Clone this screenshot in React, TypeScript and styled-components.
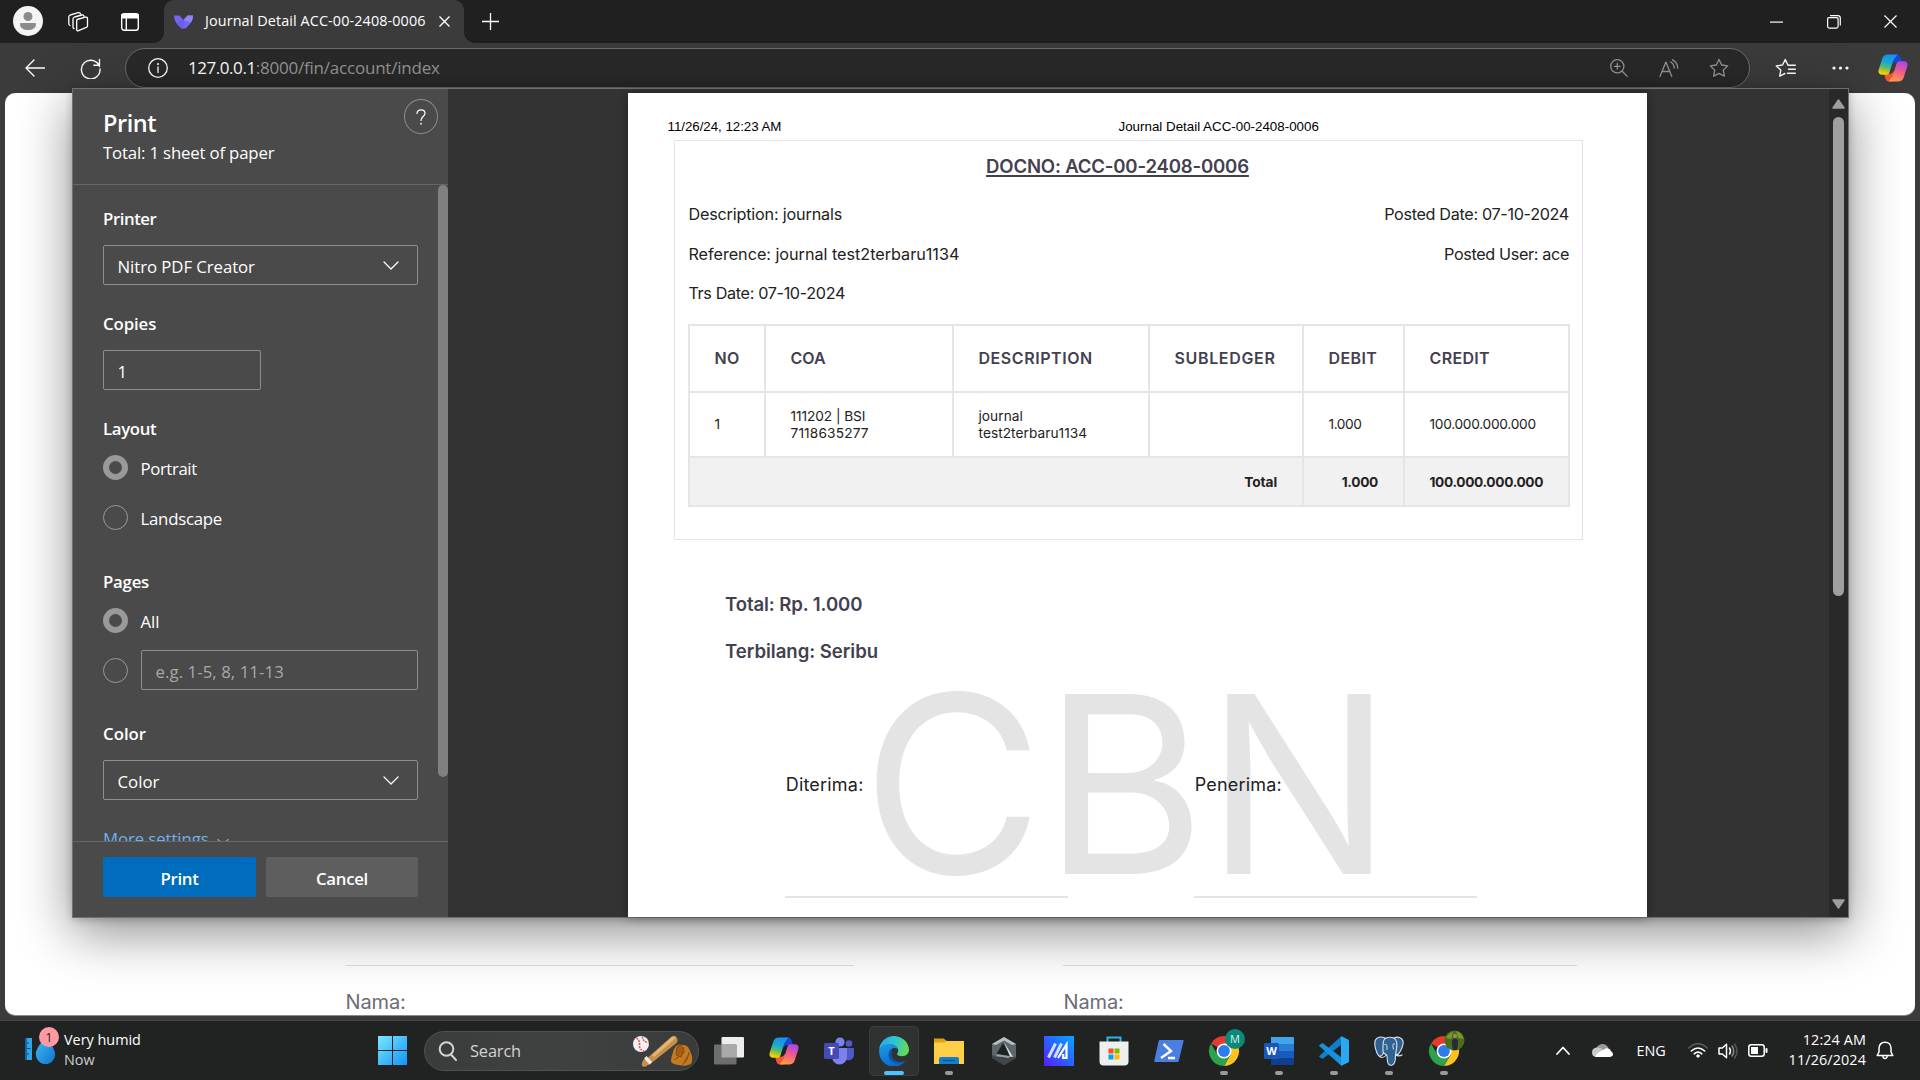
import React from "react";
import styled, { createGlobalStyle } from "styled-components";

const UI = `"Open Sans", "Noto Sans", sans-serif`;
const DOC = `Inter, "Liberation Sans", sans-serif`;

const Global = createGlobalStyle`
  * { box-sizing: border-box; }
  html, body { margin: 0; padding: 0; background: #3b3b3b; overflow: hidden; }
  svg { display: block; flex: none; }
`;

const Screen = styled.div`
  width: 1920px;
  height: 1080px;
  display: flex;
  flex-direction: column;
  background: #3b3b3b;
  color: #fff;
  font-family: ${UI};
  overflow: hidden;
`;

const Spaced = styled.span<{ $ls: number }>`
  letter-spacing: ${(p) => p.$ls}px;
  white-space: nowrap;
`;

/* ---------- Tab strip ---------- */
const TabStrip = styled.header`
  height: 43px;
  flex: none;
  display: flex;
  background: #202020;
  padding-left: 3px;
`;
const IconSlot = styled.div<{ $w?: number; $ml?: number }>`
  width: ${(p) => p.$w ?? 50}px;
  margin-left: ${(p) => p.$ml ?? 0}px;
  height: 100%;
  flex: none;
  display: flex;
  align-items: center;
  justify-content: center;
`;
const Avatar = styled.div`
  width: 30px;
  height: 30px;
  margin-top: -1px;
  border-radius: 50%;
  background: #f4f4f4;
  display: grid;
  place-items: center;
`;
const Tab = styled.div`
  position: relative;
  width: 300px;
  margin-left: 9px;
  padding: 0 14px 0 10px;
  display: flex;
  align-items: center;
  background: #3b3b3b;
  border-radius: 10px 10px 0 0;
  font-size: 14.4px;
  &::before, &::after {
    content: "";
    position: absolute;
    bottom: 0;
    width: 10px;
    height: 10px;
  }
  &::before { left: -10px; background: radial-gradient(circle at 0 0, transparent 9.5px, #3b3b3b 10px); }
  &::after { right: -10px; background: radial-gradient(circle at 100% 0, transparent 9.5px, #3b3b3b 10px); }
`;
const TabTitle = styled.span`
  margin: -2px auto 0 12px;
  letter-spacing: 0.1px;
  white-space: nowrap;
`;
const WindowControls = styled.div`
  display: flex;
  margin-left: auto;
  padding-right: 1px;
`;

/* ---------- Toolbar ---------- */
const Toolbar = styled.div`
  height: 50px;
  flex: none;
  display: flex;
  align-items: flex-start;
  padding: 5px 0 5px 10px;
  background: #3b3b3b;
`;
const AddressBar = styled.div`
  width: 1625px;
  height: 40px;
  margin-left: 10px;
  padding-right: 5px;
  display: flex;
  align-items: center;
  background: #292929;
  border: 1px solid #6b6b6b;
  border-radius: 20px;
  font-size: 17px;
  color: #969696;
`;
const Url = styled.div`
  margin-right: auto;
  margin-top: -2px;
  margin-left: -1px;
  white-space: nowrap;
`;
const Host = styled.span`
  color: #fff;
  letter-spacing: -0.45px;
`;

/* ---------- Browser viewport ---------- */
const Viewport = styled.main`
  position: relative;
  height: 927px;
  flex: none;
  padding: 0 5px 5px;
`;
const WebPage = styled.div`
  height: 922px;
  padding: 872px 0 0 340px;
  display: flex;
  gap: 209px;
  background: #fff;
  border-radius: 10px;
  overflow: hidden;
  box-shadow: 0 1px 0 #8a8a8a;
`;
const PageSigner = styled.div<{ $w: number }>`
  width: ${(p) => p.$w}px;
  border-top: 1px solid #dfdfe1;
  padding: 24px 0 0 0.6px;
  font: 400 20px/24px ${DOC};
  letter-spacing: -0.16px;
  color: #6d6b77;
`;

/* ---------- Print dialog ---------- */
const Dialog = styled.section`
  position: absolute;
  left: 72px;
  top: -5px;
  width: 1777px;
  height: 830px;
  display: flex;
  border: 1px solid #707070;
  background: #333;
  box-shadow: 0 14px 50px rgba(0, 0, 0, 0.46), 0 2px 8px rgba(0, 0, 0, 0.2);
`;
const Sidebar = styled.aside`
  width: 375px;
  flex: none;
  display: flex;
  flex-direction: column;
  background: #4a4a4a;
  font-size: 16.8px;
`;
const SideHeader = styled.div`
  height: 96px;
  flex: none;
  display: flex;
  justify-content: space-between;
  padding: 10px 10px 0 30px;
  border-bottom: 1px solid #666;
`;
const Heading = styled.h1`
  margin: 8px 0 0;
  font-size: 23.5px;
  line-height: 32px;
  font-weight: 600;
  letter-spacing: -0.45px;
`;
const SheetCount = styled.div`
  line-height: 26px;
  letter-spacing: -0.17px;
  margin-top: 1px;
`;
const HelpButton = styled.button`
  width: 34px;
  height: 35px;
  padding: 0;
  border: 1px solid #8e8e8e;
  border-radius: 50%;
  background: none;
  display: grid;
  place-items: center;
`;
const SideBody = styled.div`
  height: 656px;
  flex: none;
  display: flex;
  justify-content: space-between;
  overflow: hidden;
`;
const Form = styled.div`
  width: 345px;
  padding: 22px 0 0 30px;
`;
const SideThumb = styled.div`
  width: 10px;
  height: 592px;
  border-radius: 5px;
  background: #808080;
`;
const Label = styled.div<{ $ls: number; $mt?: number; $mb?: number }>`
  margin-top: ${(p) => p.$mt ?? 0}px;
  margin-bottom: ${(p) => p.$mb ?? 14}px;
  line-height: 24px;
  font-weight: 600;
  letter-spacing: ${(p) => p.$ls}px;
`;
const Field = styled.div<{ $w?: number; $muted?: boolean }>`
  width: ${(p) => (p.$w ? p.$w + "px" : "100%")};
  height: 40px;
  padding: 2px 18px 0 13.5px;
  display: flex;
  align-items: center;
  justify-content: space-between;
  border: 1px solid #8e8e8e;
  border-radius: 2px;
  color: ${(p) => (p.$muted ? "#a8a8a8" : "#fff")};
`;
const Option = styled.div`
  height: 50px;
  display: flex;
  align-items: center;
  gap: 13px;
`;
const Radio = styled.span<{ $on?: boolean }>`
  width: 25px;
  height: 25px;
  flex: none;
  border-radius: 50%;
  border: ${(p) => (p.$on ? "6px solid #999" : "1px solid #999")};
`;
const OptionText = styled.span<{ $ls: number }>`
  margin: 3px 0 0 -0.5px;
  letter-spacing: ${(p) => p.$ls}px;
`;
const More = styled.div`
  margin-top: 27px;
  display: flex;
  align-items: flex-start;
  gap: 8px;
  line-height: 24px;
  letter-spacing: -0.1px;
  color: #70b0ee;
  svg { margin-top: 11px; }
`;
const SideFooter = styled.div`
  flex: 1;
  display: flex;
  gap: 10px;
  padding: 15px 30px 0;
  border-top: 1px solid #666;
`;
const ActionButton = styled.button<{ $primary?: boolean }>`
  width: ${(p) => (p.$primary ? 153 : 152)}px;
  height: 40px;
  padding: 2px 0 0;
  border: 0;
  border-radius: 2px;
  background: ${(p) => (p.$primary ? "#006cbe" : "#5e5e5e")};
  color: #fff;
  font: 600 16.8px ${UI};
  letter-spacing: -0.3px;
`;
const Preview = styled.div`
  flex: 1;
  display: flex;
  padding: 4px 0 0 180px;
`;
const ScrollTrack = styled.div`
  width: 19px;
  display: flex;
  flex-direction: column;
  align-items: center;
  padding: 10px 0 8px;
  background: #292929;
`;
const ScrollThumb = styled.div`
  width: 11px;
  height: 479px;
  margin: 8px 0 auto;
  border-radius: 6px;
  background: #9f9f9f;
`;

/* ---------- Printed sheet ---------- */
const Sheet = styled.article`
  position: relative;
  z-index: 0;
  width: 1019px;
  background: #fff;
  color: #222;
  font-family: ${DOC};
  overflow: hidden;
  box-shadow: 0 0 10px rgba(0, 0, 0, 0.35);
`;
const RunningHead = styled.div`
  display: grid;
  grid-template-columns: 451px auto;
  padding: 26px 0 0 39.5px;
  font: 13.33px/15px "Liberation Sans", Arial, sans-serif;
  color: #000;
`;
const Journal = styled.div`
  width: 909px;
  height: 400px;
  margin: 6px 0 0 46px;
  padding: 12px 12px 0 13px;
  border: 1px solid #e3e4e6;
`;
const DocNo = styled.h2`
  margin: 0 23px 23px 0;
  text-align: center;
  font-size: 18.6px;
  line-height: 26px;
  font-weight: 600;
  letter-spacing: -0.19px;
  color: #444050;
  text-decoration: underline;
  text-decoration-thickness: 2px;
  text-underline-offset: 2px;
  text-decoration-skip-ink: none;
`;
const Meta = styled.div`
  display: flex;
  justify-content: space-between;
  font-size: 16.2px;
  line-height: 24px;
  margin-bottom: 19px;
`;
const MetaColumn = styled.div<{ $end?: boolean }>`
  display: flex;
  flex-direction: column;
  gap: 15.5px;
  padding: 0 ${(p) => (p.$end ? 1 : 0)}px 0 0.4px;
  align-items: ${(p) => (p.$end ? "flex-end" : "flex-start")};
`;
const Table = styled.div`
  display: grid;
  grid-template-columns: 76px 188px 196px 154px 101px 165px;
  grid-template-rows: 67px 65px 49px;
  border: solid #e4e5e8;
  border-width: 2px 0 0 2px;
`;
const Cell = styled.div<{ $kind?: "head" | "total"; $span?: number; $end?: boolean; $ls?: number }>`
  grid-column: span ${(p) => p.$span ?? 1};
  display: flex;
  align-items: center;
  justify-content: ${(p) => (p.$end ? "flex-end" : "flex-start")};
  padding: ${(p) => (p.$kind === "total" ? 1 : 0)}px 25px 0 24.5px;
  border: solid #e4e5e8;
  border-width: 0 2px 2px 0;
  white-space: nowrap;
  background: ${(p) => (p.$kind === "total" ? "#f1f1f1" : "#fff")};
  color: ${(p) => (p.$kind === "head" ? "#444050" : "#222")};
  font-size: ${(p) => (p.$kind === "head" ? 16 : 13.7)}px;
  font-weight: ${(p) => (p.$kind === "head" ? 600 : p.$kind === "total" ? 700 : 400)};
  line-height: 16.3px;
  letter-spacing: ${(p) => p.$ls ?? 0}px;
`;
const SummaryLine = styled.div<{ $mt: number; $ls: number }>`
  margin: ${(p) => p.$mt}px 0 0 97px;
  font-size: 18.6px;
  line-height: 28px;
  font-weight: 600;
  letter-spacing: ${(p) => p.$ls}px;
  color: #444050;
`;
const Signatures = styled.div`
  display: flex;
  gap: 126px;
  margin: 108px 0 0 157px;
`;
const Signer = styled.div`
  width: 283px;
  height: 125px;
  border-bottom: 2px solid #e4e4e4;
  padding-left: 0.7px;
  font-size: 18px;
  line-height: 24px;
  letter-spacing: 0.2px;
`;
const Watermark = styled.div`
  position: absolute;
  z-index: -1;
  left: 234px;
  top: 567px;
  font-size: 248px;
  line-height: 248px;
  color: #e4e4e4;
`;

/* ---------- Taskbar ---------- */
const Taskbar = styled.footer`
  height: 60px;
  flex: none;
  display: flex;
  align-items: center;
  background: #212222;
  border-top: 1px solid #444645;
  font-size: 14.4px;
`;
const Weather = styled.div`
  width: 367px;
  height: 100%;
  flex: none;
  display: flex;
  padding: 6px 0 0 25px;
  gap: 5px;
`;
const WeatherText = styled.div`
  line-height: 20px;
  padding-top: 3px;
`;
const Dim = styled.div`
  color: #cfcfcf;
`;
const SearchBox = styled.div`
  width: 275px;
  height: 40px;
  margin: 0 5px 0 7px;
  padding: 0 4px 0 13px;
  display: flex;
  align-items: center;
  background: linear-gradient(90deg, #3a3c3c, #404241 45%, #393c3b);
  border: 1px solid #505251;
  border-radius: 20px;
  color: #d2d2d2;
  font-size: 16.4px;
`;
const SearchText = styled.span`
  margin: -1px auto 0 13px;
  letter-spacing: -0.15px;
`;
const Apps = styled.div`
  display: flex;
  gap: 5px;
`;
const AppSlot = styled.div<{ $active?: boolean; $running?: boolean }>`
  position: relative;
  width: 50px;
  height: 50px;
  display: grid;
  place-items: center;
  border-radius: 5px;
  background: ${(p) => (p.$active ? "#303131" : "none")};
  box-shadow: ${(p) => (p.$active ? "inset 0 0 0 1px #3b3c3c" : "none")};
  &::after {
    content: "";
    position: absolute;
    bottom: 1px;
    left: 50%;
    transform: translateX(-50%);
    width: ${(p) => (p.$active ? 20 : 8)}px;
    height: 4px;
    border-radius: 2px;
    background: ${(p) => (p.$active ? "#4cc2ff" : p.$running ? "#9a9a9a" : "transparent")};
  }
`;
const Tray = styled.div`
  margin-left: auto;
  display: flex;
  align-items: center;
  padding-right: 26px;
`;
const Language = styled.span`
  margin: -1px 22.5px 0 23.5px;
  letter-spacing: -0.1px;
`;
const Status = styled.div`
  display: flex;
  align-items: center;
  gap: 10px;
`;
const Clock = styled.div`
  width: 98px;
  margin-right: 10px;
  text-align: right;
  line-height: 20px;
  letter-spacing: 0.1px;
  margin-top: -2px;
`;

/* ---------- Icons ---------- */
const line = { fill: "none", stroke: "currentColor", strokeLinecap: "round" as const, strokeLinejoin: "round" as const };

const ribbon = "M10 .5h9.500L16.500 4.500c-1.200 1.600-1.800 3.300-2.300 5l-2.700 9c-.5 1.500-1.500 2.200-3 2.200H3.500C1 20.700 0 18.500.6 16L4.300 4.500C5.200 1.700 7 .5 10 .5z";
const fold = "M15 .5h4c2 0 3 1 3.600 3l1.300 4.500H19c-2.300 0-3.800.8-4.600 3L13 9z";
const Copilot = ({ id }: { id: string }) => (
  <svg width="30" height="28" viewBox="0 0 30 28">
    <defs>
      <linearGradient id={id + "a"} x1="0.6" y1="0" x2="0.35" y2="1">
        <stop offset="0" stopColor="#1a8ff0" /><stop offset=".35" stopColor="#16a3d8" />
        <stop offset=".65" stopColor="#53bd72" /><stop offset=".95" stopColor="#f3d000" />
      </linearGradient>
      <linearGradient id={id + "b"} x1="0.35" y1="1" x2="0.65" y2="0">
        <stop offset="0" stopColor="#a648ea" /><stop offset=".45" stopColor="#f0588c" /><stop offset="1" stopColor="#ff9a4a" />
      </linearGradient>
    </defs>
    <path d={fold} fill="#1747cf" />
    <g transform="rotate(180 15 14)">
      <path d={fold} fill="#f4562e" />
      <path d={ribbon} fill={`url(#${id}b)`} />
    </g>
    <path d={ribbon} fill={`url(#${id}a)`} />
  </svg>
);
const Chevron = () => (
  <svg width="16" height="10" viewBox="0 0 16 10" {...line} strokeWidth="1.300"><path d="M1 1l7 7 7-7" /></svg>
);
const Close = ({ s, w = 1.4 }: { s: number; w?: number }) => (
  <svg width={s} height={s} viewBox={`0 0 ${s} ${s}`} stroke="#fff" strokeWidth={w}><path d={`M.5 .5L${s - 0.5} ${s - 0.5}M${s - 0.5} .5L.5 ${s - 0.5}`} /></svg>
);
const star = "M10 1.500l2.700 5.500 6 .9-4.400 4.200 1.100 6-5.400-2.800-5.400 2.800 1.100-6L1.300 7.900l6-.9z";

const Chrome = ({ children }: { children?: React.ReactNode }) => (
  <svg width="38" height="38" viewBox="0 0 38 38" overflow="visible">
    <g transform="translate(4 4)">
      <path d="M15 15L2 7.500A15 15 0 0 1 28 7.500z" fill="#e33b2e" />
      <path d="M15 7.500H28A15 15 0 0 1 15 30l6.500-11.200z" fill="#fcc31e" />
      <path d="M2 7.500A15 15 0 0 0 15 30l6.500-11.200L8.500 18.800z" fill="#2da14c" />
      <circle cx="15" cy="15" r="7.500" fill="#fff" />
      <circle cx="15" cy="15" r="5.900" fill="#2f7bea" />
    </g>
    {children}
  </svg>
);
const Badge = styled.span`
  position: absolute;
  right: 4px;
  top: 3px;
  width: 20px;
  height: 20px;
  border-radius: 50%;
  display: grid;
  place-items: center;
  background: #0b8a7a;
  color: #d5efec;
  font-size: 11px;
`;
const Count = styled.span`
  position: absolute;
  left: 14px;
  top: 0;
  width: 20px;
  height: 20px;
  border-radius: 50%;
  display: grid;
  place-items: center;
  background: #ff99a4;
  color: #3a1a1d;
  font-size: 13px;
`;
const WeatherIcon = styled.div`
  position: relative;
  width: 34px;
  height: 40px;
  padding-top: 5px;
`;
const IconLetter = styled.span<{ $bg: string }>`
  position: absolute;
  left: 10px;
  top: 17px;
  width: 15px;
  height: 16px;
  border-radius: 1.5px;
  display: grid;
  place-items: center;
  background: ${(p) => p.$bg};
  color: #fff;
  font-size: 11px;
  font-weight: 700;
`;

const apps: { id: string; active?: boolean; running?: boolean; icon: React.ReactNode }[] = [
  {
    id: "task-view",
    icon: (
      <svg width="30" height="28" viewBox="0 0 30 28">
        <rect x="7.500" y="0" width="22.500" height="20.500" rx="1" fill="#ededed" />
        <rect x="0" y="7.500" width="22.500" height="20" rx="1" fill="#6e6e6e" />
        <rect x="7.500" y="7.500" width="15" height="13" fill="#a9a9a9" />
      </svg>
    ),
  },
  { id: "copilot", icon: <Copilot id="task" /> },
  {
    id: "teams",
    icon: (
      <>
        <svg width="30" height="28" viewBox="0 0 30 28">
          <circle cx="25" cy="6.500" r="3.300" fill="#5059c9" />
          <circle cx="16" cy="5" r="4.600" fill="#7b83eb" />
          <path d="M21 11h8a1 1 0 0 1 1 1v6a5.500 5.500 0 0 1-9 4z" fill="#5059c9" />
          <path d="M9 11h13a1 1 0 0 1 1 1v8a7.500 7.500 0 0 1-15 0z" fill="#7b83eb" />
        </svg>
        <IconLetter $bg="#444bb5">T</IconLetter>
      </>
    ),
  },
  {
    id: "edge",
    active: true,
    icon: (
      <svg width="30" height="30" viewBox="0 0 30 30">
        <defs>
          <linearGradient id="eg" x1="0" y1=".4" x2="1" y2=".6"><stop offset="0" stopColor="#2aa9e6" /><stop offset=".5" stopColor="#2fc6cf" /><stop offset="1" stopColor="#6bdc4c" /></linearGradient>
          <linearGradient id="eb" x1="0" y1="0" x2=".4" y2="1"><stop offset="0" stopColor="#1b9de2" /><stop offset="1" stopColor="#0b6bd0" /></linearGradient>
        </defs>
        <path d="M.1 14A15 15 0 0 1 30 13.500c0 4-3 6.700-7 6.700-3.200 0-5-1-5-2.100 0-.9 1.200-1.300 1.200-3.700C19.200 11 15.500 8.500 10.800 8.500 5.500 8.500 1.500 11 .1 14z" fill="url(#eg)" />
        <path d="M0 15.500C.5 11 5 8 10.200 8c4.500 0 8.300 2 8.800 5.500-1-1.200-2.300-1.600-3.500-1.600-3 0-5.300 2.800-5.300 6.600 0 4.500 3.800 8.300 9.300 8.300 3.500 0 6-1 7.300-2A15 15 0 0 1 0 15.500z" fill="url(#eb)" />
        <path d="M13.500 12.200c-2.400.8-4 3.200-4 6.500 0 5 4.300 8.800 10 8.800 2.800 0 4.800-.7 6-1.400.6-.3 1-.9 1.300-1.300-1.500.7-3 1-4.600 1-5.400 0-9.600-3-9.600-7.600 0-2.400.5-4.200.9-6z" fill="#0c549f" />
      </svg>
    ),
  },
  {
    id: "explorer",
    running: true,
    icon: (
      <svg width="30" height="28" viewBox="0 0 30 28">
        <path d="M0 1.500h9.500L13 4h17v8H0z" fill="#e0a010" />
        <path d="M0 5.500h10L13 4h17v23H0z" fill="#ffcf47" />
        <path d="M5 27v-5a2 2 0 0 1 2-2h16a2 2 0 0 1 2 2v5z" fill="#1380cf" />
        <path d="M9 23.500h12" stroke="#0a4f8f" strokeWidth="1.200" />
      </svg>
    ),
  },
  {
    id: "armoury",
    icon: (
      <svg width="26" height="28" viewBox="0 0 26 28">
        <path d="M13 0l12 7v14l-12 7-12-7V7z" fill="#5d666c" />
        <path d="M13 0l12 7-4 1-8-4.500L5 8 1 7z" fill="#b9c0c5" />
        <path d="M1 18l5 2h19v1l-12 7L1 21z" fill="#3f4549" />
        <path d="M12 6L5.500 17l14 2z" fill="#1f2223" />
        <path d="M13 5l9 15-3-.6z" fill="#dde0e2" />
        <path d="M5.500 17l14 2.400-2 1.600-12-2z" fill="#9aa1a6" />
      </svg>
    ),
  },
  {
    id: "myasus",
    icon: (
      <svg width="30" height="30" viewBox="0 0 30 30">
        <defs><linearGradient id="my" x1="0" y1="1" x2="1" y2="0"><stop offset="0" stopColor="#5a1bff" /><stop offset=".5" stopColor="#2a63ff" /><stop offset="1" stopColor="#05a8ff" /></linearGradient></defs>
        <rect width="30" height="30" fill="url(#my)" />
        <path d="M4.500 21.500L11.500 7.500M10.500 21.500L17.500 7.500" stroke="#cfe0ff" strokeWidth="3" />
        <path d="M14 22L22.500 8.500v13.500h-3.300v-4" fill="none" stroke="#fff" strokeWidth="2.200" />
      </svg>
    ),
  },
  {
    id: "store",
    icon: (
      <svg width="30" height="30" viewBox="0 0 30 30">
        <path d="M8.500 7V1.500h13V7" fill="none" stroke="#2cb5ea" strokeWidth="2" />
        <path d="M.5 5.500h29v20a4 4 0 0 1-4 4h-21a4 4 0 0 1-4-4z" fill="#eeeeee" />
        <path d="M9.500 12.500h5v5h-5z" fill="#f25022" /><path d="M15.500 12.500h5v5h-5z" fill="#7fba00" />
        <path d="M9.500 18.500h5v5h-5z" fill="#00a4ef" /><path d="M15.500 18.500h5v5h-5z" fill="#ffb900" />
      </svg>
    ),
  },
  {
    id: "powershell",
    icon: (
      <svg width="30" height="22" viewBox="0 0 30 22">
        <path d="M6 0h22.500a1 1 0 0 1 1 1.300l-4.700 19.500a1.500 1.500 0 0 1-1.500 1.200H1.300a1 1 0 0 1-1-1.300L4.600 1.200A1.500 1.500 0 0 1 6 0z" fill="#4a7fe0" />
        <path d="M9.500 4l7.500 7-10 7M14 18h7" fill="none" stroke="#fff" strokeWidth="2.400" />
      </svg>
    ),
  },
  { id: "chrome-m", running: true, icon: <><Chrome /><Badge>M</Badge></> },
  {
    id: "word",
    running: true,
    icon: (
      <>
        <svg width="30" height="28" viewBox="0 0 30 28">
          <path d="M7 0h22a1 1 0 0 1 1 1v6H7z" fill="#41a5ee" /><path d="M7 7h23v7H7z" fill="#2b7cd3" />
          <path d="M7 14h23v7H7z" fill="#185abd" /><path d="M7 21h23v6a1 1 0 0 1-1 1H7z" fill="#103f91" />
        </svg>
        <IconLetter $bg="#1a56b8">W</IconLetter>
      </>
    ),
  },
  {
    id: "vscode",
    running: true,
    icon: (
      <svg width="30" height="30" viewBox="0 0 30 30">
        <path d="M22 9L3.500 23 .8 21.200a1 1 0 0 1 0-1.700L22 .5z" fill="#0e7fc9" />
        <path d="M22 21L3.500 7 .8 8.800a1 1 0 0 0 0 1.700L22 29.500z" fill="#1791dc" />
        <path d="M22 0l7 3.400a2 2 0 0 1 1 1.700v19.800a2 2 0 0 1-1 1.700L22 30z" fill="#2ba8f2" />
      </svg>
    ),
  },
  {
    id: "postgres",
    running: true,
    icon: (
      <svg width="30" height="30" viewBox="0 0 30 30" stroke="#dbe4ec" strokeWidth="1.100" strokeLinejoin="round" fill="#2f6292">
        <path d="M11 2C7 .2 2.500.8 1.200 4.500c-1.200 4 .8 12 3.300 15 1.500 1.500 3 .5 4-1 .8-1 1-2 2-2.500z" />
        <path d="M20 2c4-2 8-.5 9 3 .6 4-2 9.500-4.500 13-1 1-3 .5-3.500-1z" />
        <path d="M10.500 3C13 .8 19 .5 21.500 3.500c1.800 2.500 1.500 7 .8 10.500-.5 3-.8 4-.8 6 0 4-.3 8.500-3.700 9.200-3.300.5-4.300-2-4.500-5.500 0-2-.1-4-.8-5-2-.7-3.500-1.700-3.500-4 0-3.700-.5-8.700 1.500-11.700z" />
        <path d="M21.500 19c2 1.200 4.500 1.200 7-.3M5.500 20.500c2 1.500 5 .7 7-1.500" fill="none" />
        <path d="M10.500 8.500q2-1 2.500 1.500v4M21 8q-2-1-2.300 1.500l.8 4" fill="none" strokeWidth=".9" />
      </svg>
    ),
  },
  {
    id: "chrome-photo",
    running: true,
    icon: (
      <Chrome>
        <circle cx="29.500" cy="8.500" r="10" fill="#4c6b1c" />
        <path d="M21 6q3-5.500 7-6l-2 7zM31-1q6 1 7.500 8l-5-1z" fill="#769a2a" />
        <circle cx="30" cy="4" r="2" fill="#a98264" />
        <path d="M27 8q3-3 6 0v5l-1 5h-4l-1-5z" fill="#252a3c" />
      </Chrome>
    ),
  },
];

const heads: [string, number][] = [["NO", 0.3], ["COA", 0], ["DESCRIPTION", 0.56], ["SUBLEDGER", 0.65], ["DEBIT", 0.38], ["CREDIT", 0.34]];

export default function App() {
  return (
    <Screen>
      <Global />
      <TabStrip>
        <IconSlot>
          <Avatar>
            <svg width="16" height="18" viewBox="0 0 16 18" fill="#8b8b8b"><circle cx="8" cy="4.500" r="4.500" /><path d="M1 11h14a1 1 0 0 1 1 1c0 4-3.500 6-8 6s-8-2-8-6a1 1 0 0 1 1-1z" /></svg>
          </Avatar>
        </IconSlot>
        <IconSlot>
          <svg width="22" height="22" viewBox="0 0 22 22" {...line} strokeWidth="1.300">
            <path d="M10 8.500l8.500-2.300q2-.4 2 1.500v7q0 1.200-1.200 1.700l-7.800 3.300q-1.800.6-1.800-1.200v-8q0-1.500.3-2z" />
            <path d="M17 5.500q-.3-2-2.200-1.500L7.500 6Q6 6.500 6 8v8q0 1.300 1 1.700" />
            <path d="M13.500 3q-.4-1.700-2.200-1.300L3.200 4Q1.800 4.500 1.800 6v6.500q0 1.500 1.200 2" />
          </svg>
        </IconSlot>
        <IconSlot $ml={2}>
          <svg width="18" height="18" viewBox="0 0 18 18" {...line} strokeWidth="1.400"><rect x=".7" y=".7" width="16.600" height="16.600" rx="2.500" /><path d="M1 1.500h16v3.200H1z" fill="#fff" /><path d="M5.300 5v12" /></svg>
        </IconSlot>
        <Tab>
          <svg width="19" height="14" viewBox="0 0 19 14"><path d="M0 .5h5.500L9.500 5l4-4.500H19c0 4-1.500 7-4 9.500L11.500 13.500h-4L4 10C1.500 7.500 0 4.500 0 .5z" fill="#7367f0" /><path d="M9.500 5l4-4.500H19c0 3-.8 5-2 7z" fill="#8f85f6" /><path d="M2 7l7.500-2v8.500h-2L4 10z" fill="#6a5df0" /></svg>
          <TabTitle>Journal Detail ACC-00-2408-0006</TabTitle>
          <Close s={11} />
        </Tab>
        <IconSlot $w={53}>
          <svg width="17" height="17" viewBox="0 0 17 17" stroke="#fff" strokeWidth="1.300"><path d="M8.500 0v17M0 8.500h17" /></svg>
        </IconSlot>
        <WindowControls>
          <IconSlot $w={57}><svg width="13" height="2" viewBox="0 0 13 2"><path d="M0 .5h13v1.200H0z" fill="#fff" /></svg></IconSlot>
          <IconSlot $w={57}>
            <svg width="14" height="14" viewBox="0 0 14 14" {...line} strokeWidth="1.200"><rect x=".6" y="2.600" width="10.500" height="10.500" rx="1.500" /><path d="M3.500.6h7.400q2.400 0 2.400 2.400v7" /></svg>
          </IconSlot>
          <IconSlot $w={57}><Close s={13} w={1.2} /></IconSlot>
        </WindowControls>
      </TabStrip>

      <Toolbar>
        <IconSlot>
          <svg width="20" height="18" viewBox="0 0 20 18" {...line} strokeWidth="1.300"><path d="M19.500 9H1M9 1L1 9l8 8" /></svg>
        </IconSlot>
        <IconSlot $ml={5}>
          <svg width="21" height="21" viewBox="0 0 21 21" {...line} strokeWidth="1.400"><path d="M19.500 8.500A9.300 9.300 0 1 0 20 11M19.500 1.500v5.700h-5.700" /></svg>
        </IconSlot>
        <AddressBar>
          <IconSlot $w={63}>
            <svg width="20" height="20" viewBox="0 0 20 20" {...line} color="#fff" strokeWidth="1.300"><circle cx="10" cy="10" r="9.300" /><path d="M10 9v5.500" /><path d="M10 5.800v.4" strokeWidth="1.800" /></svg>
          </IconSlot>
          <Url><Host>127.0.0.1</Host><Spaced $ls={-0.21}>:8000/fin/account/index</Spaced></Url>
          <IconSlot>
            <svg width="18" height="18" viewBox="0 0 18 18" {...line} strokeWidth="1.300"><circle cx="7.300" cy="7.300" r="6.600" /><path d="M12.200 12.200l5 5M7.300 4.500v5.600M4.500 7.300h5.600" /></svg>
          </IconSlot>
          <IconSlot>
            <svg width="20" height="19" viewBox="0 0 20 19" {...line} strokeWidth="1.300"><path d="M1 17.500L6.900 3l5.900 14.500M3 12.500h7.800M11.500 3q3.500 1.500 3.700 6M13.500.8q5 2.500 5.200 8.400" /></svg>
          </IconSlot>
          <IconSlot><svg width="20" height="20" viewBox="0 0 20 20" {...line} strokeWidth="1.300"><path d={star} /></svg></IconSlot>
        </AddressBar>
        <IconSlot $ml={10}>
          <svg width="21" height="20" viewBox="0 0 21 20" {...line} strokeWidth="1.400"><path d="M13 7.200L10.300 1.500 7.500 7l-6.200.9 4.500 4.200-1.100 6 5.200-2.600M13 7.200h7.300M13.500 11.200h6.800M12.500 15.200h7.800" /></svg>
        </IconSlot>
        <IconSlot $ml={5}><svg width="17" height="4" viewBox="0 0 17 4" fill="#fff"><circle cx="2" cy="2" r="1.600" /><circle cx="8.500" cy="2" r="1.600" /><circle cx="15" cy="2" r="1.600" /></svg></IconSlot>
        <IconSlot $ml={3}><Copilot id="bar" /></IconSlot>
      </Toolbar>

      <Viewport>
        <WebPage>
          <PageSigner $w={509}>Nama:</PageSigner>
          <PageSigner $w={514}>Nama:</PageSigner>
        </WebPage>
        <Dialog>
          <Sidebar>
            <SideHeader>
              <div>
                <Heading>Print</Heading>
                <SheetCount>Total: 1 sheet of paper</SheetCount>
              </div>
              <HelpButton>
                <svg width="10" height="16" viewBox="0 0 10 16" {...line} color="#fff" strokeWidth="1.200"><path d="M1 4.500C1 2 2.700.8 5 .8s4 1.400 4 3.500C9 7.500 5 7.500 5 11.500" /><path d="M5 14.500v.2" strokeWidth="1.700" /></svg>
              </HelpButton>
            </SideHeader>
            <SideBody>
              <Form>
                <Label $ls={-0.44}>Printer</Label>
                <Field><Spaced $ls={-0.07}>Nitro PDF Creator</Spaced><Chevron /></Field>
                <Label $ls={-0.1} $mt={27}>Copies</Label>
                <Field $w={158}>1</Field>
                <Label $ls={-0.36} $mt={27} $mb={1}>Layout</Label>
                <Option><Radio $on /><OptionText $ls={-0.4}>Portrait</OptionText></Option>
                <Option><Radio /><OptionText $ls={-0.25}>Landscape</OptionText></Option>
                <Label $ls={-0.24} $mt={28} $mb={1}>Pages</Label>
                <Option><Radio $on /><OptionText $ls={0}>All</OptionText></Option>
                <Option><Radio /><Field $muted><Spaced $ls={0.07}>e.g. 1-5, 8, 11-13</Spaced></Field></Option>
                <Label $ls={0} $mt={27}>Color</Label>
                <Field>Color<Chevron /></Field>
                <More>More settings<svg width="12" height="8" viewBox="0 0 12 8" {...line} strokeWidth="1.200"><path d="M1 1.500l5 5 5-5" /></svg></More>
              </Form>
              <SideThumb />
            </SideBody>
            <SideFooter>
              <ActionButton $primary>Print</ActionButton>
              <ActionButton>Cancel</ActionButton>
            </SideFooter>
          </Sidebar>
          <Preview>
            <Sheet>
              <Watermark>CBN</Watermark>
              <RunningHead>
                <Spaced $ls={-0.04}>11/26/24, 12:23 AM</Spaced>
                <Spaced $ls={0.01}>Journal Detail ACC-00-2408-0006</Spaced>
              </RunningHead>
              <Journal>
                <DocNo>DOCNO: ACC-00-2408-0006</DocNo>
                <Meta>
                  <MetaColumn>
                    <Spaced $ls={-0.18}>Description: journals</Spaced>
                    <Spaced $ls={-0.02}>Reference: journal test2terbaru1134</Spaced>
                    <Spaced $ls={-0.35}>Trs Date: 07-10-2024</Spaced>
                  </MetaColumn>
                  <MetaColumn $end>
                    <Spaced $ls={-0.33}>Posted Date: 07-10-2024</Spaced>
                    <Spaced $ls={-0.36}>Posted User: ace</Spaced>
                  </MetaColumn>
                </Meta>
                <Table>
                  {heads.map(([h, ls]) => <Cell key={h} $kind="head" $ls={ls}>{h}</Cell>)}
                  <Cell>1</Cell>
                  <Cell $ls={0.15}><div><Spaced $ls={-0.07}>111202 | BSI</Spaced><br />7118635277</div></Cell>
                  <Cell $ls={0.05}><div>journal<br />test2terbaru1134</div></Cell>
                  <Cell />
                  <Cell $ls={-0.4}>1.000</Cell>
                  <Cell $ls={-0.27}>100.000.000.000</Cell>
                  <Cell $kind="total" $span={4} $end $ls={-0.1}>Total</Cell>
                  <Cell $kind="total" $end $ls={-0.3}>1.000</Cell>
                  <Cell $kind="total" $ls={-0.34}>100.000.000.000</Cell>
                </Table>
              </Journal>
              <SummaryLine $mt={50} $ls={-0.1}>Total: Rp. 1.000</SummaryLine>
              <SummaryLine $mt={19} $ls={-0.03}>Terbilang: Seribu</SummaryLine>
              <Signatures>
                <Signer>Diterima:</Signer>
                <Signer>Penerima:</Signer>
              </Signatures>
            </Sheet>
          </Preview>
          <ScrollTrack>
            <svg width="13" height="10" viewBox="0 0 13 10"><path d="M6.500 1L12 9H1z" fill="#9f9f9f" stroke="#9f9f9f" strokeLinejoin="round" strokeWidth="1.500" /></svg>
            <ScrollThumb />
            <svg width="13" height="10" viewBox="0 0 13 10"><path d="M6.500 9L12 1H1z" fill="#9f9f9f" stroke="#9f9f9f" strokeLinejoin="round" strokeWidth="1.500" /></svg>
          </ScrollTrack>
        </Dialog>
      </Viewport>

      <Taskbar>
        <Weather>
          <WeatherIcon>
            <svg width="32" height="32" viewBox="0 0 32 32">
              <defs><linearGradient id="drop" x1="0" y1="0" x2="1" y2="1"><stop offset="0" stopColor="#3cc0f4" /><stop offset="1" stopColor="#1273cf" /></linearGradient></defs>
              <path d="M0 6h7v22H0z" fill="#2fa8e8" /><path d="M0 6h2v22H0z" fill="#1664a8" />
              <path d="M2 11h2M2 16.500h3.500M2 22h2" stroke="#0d4f8b" strokeWidth="1.200" />
              <path d="M20.500 4c3 6 9.700 12 9.700 18.500a9.700 9.700 0 0 1-19.400 0C10.800 16 17.500 10 20.500 4z" fill="url(#drop)" />
            </svg>
            <Count>1</Count>
          </WeatherIcon>
          <WeatherText>Very humid<Dim>Now</Dim></WeatherText>
        </Weather>
        <AppSlot>
          <svg width="29" height="29" viewBox="0 0 29 29">
            <defs><linearGradient id="win" x1="0" y1="0" x2="1" y2="1"><stop offset="0" stopColor="#7be8ff" /><stop offset="1" stopColor="#1093f5" /></linearGradient></defs>
            <path d="M0 0h14v14H0zM15 0h14v14H15zM0 15h14v14H0zM15 15h14v14H15z" fill="url(#win)" />
          </svg>
        </AppSlot>
        <SearchBox>
          <svg width="19" height="20" viewBox="0 0 19 20" {...line} strokeWidth="2"><circle cx="8.500" cy="8" r="6.800" /><path d="M13 13.500l5 5.500" /></svg>
          <SearchText>Search</SearchText>
          <svg width="62" height="32" viewBox="0 0 62 32">
            <path d="M12 26L39 2q4-3 6 1t-3 7L17 30z" fill="#c8904a" />
            <path d="M20 20L39 3q3-2 4.500 0L22 22z" fill="#e3b877" />
            <path d="M12 24l5 5-3 2.500q-3 1-4-1t2-6.500z" fill="#c8904a" />
            <path d="M14.500 21l5.500 6-2.500 2.500-5.500-6z" fill="#f3eee6" />
            <circle cx="9" cy="9" r="8" fill="#f2eff5" />
            <path d="M4.500 3q3.500 2.500 3 7t4.500 6M10.500 1.500Q10 6 16.500 8" fill="none" stroke="#e0563c" strokeWidth="1.500" strokeDasharray="2 1" />
            <path d="M42 14q3-6 8-4 6-1 8 6 4 8 1 13-6 3-12 1-8-1-8-4t3-12z" fill="#c47a22" />
            <path d="M45 12q4-4 7 2l-3 8-5-2zM42 25q8-4 11-9M50 30q6-4 7-13" fill="#a55e14" stroke="#8a4c10" strokeWidth="1" />
          </svg>
        </SearchBox>
        <Apps>
          {apps.map((a) => <AppSlot key={a.id} $active={a.active} $running={a.running}>{a.icon}</AppSlot>)}
        </Apps>
        <Tray>
          <svg width="14" height="9" viewBox="0 0 14 9" {...line} strokeWidth="1.800"><path d="M1 8l6-6.500L13 8" /></svg>
          <IconSlot $w={21} $ml={22}>
            <svg width="21" height="13" viewBox="0 0 21 13"><path d="M4.500 3.500Q7 0 10.500 0q4 0 6 4l-6 5-9-1q0-3.500 3-4.500z" fill="#9a9a9a" /><path d="M4 3.700q3-1 6 1.300l4 3-10 5q-4-.5-4-4.500 0-4 4-4.800z" fill="#c9c9c9" /><path d="M3 12.500Q5 8.500 9.500 7L14 4.300q4-.5 5 3 2 .8 2 3t-3 2.700H4z" fill="#fff" /></svg>
          </IconSlot>
          <Language>ENG</Language>
          <Status>
            <svg width="20" height="15" viewBox="0 0 20 15" {...line} strokeWidth="1.600"><path d="M.8 5q9.200-8.500 18.400 0" stroke="#5c5c5c" /><path d="M3.300 8q6.700-6 13.400 0M6.200 10.800q3.800-3.400 7.600 0" /><circle cx="10" cy="13" r="1.300" fill="#fff" strokeWidth=".8" /></svg>
            <svg width="20" height="18" viewBox="0 0 20 18" {...line} strokeWidth="1.500"><path d="M1 6h3.300L8.500 2.300v13.400L4.300 12H1zM11.500 6q2 3 0 6" /><path d="M14 4q3.500 5 0 10" stroke="#888" /><path d="M16.500 2q5 7 0 14" stroke="#555" /></svg>
            <svg width="20" height="13" viewBox="0 0 20 13" {...line} strokeWidth="1.500"><rect x=".8" y=".8" width="15.400" height="11.400" rx="2.500" /><rect x="3" y="3" width="7" height="7" fill="#fff" stroke="none" /><path d="M18.500 5v3" strokeWidth="2" /></svg>
          </Status>
          <Clock>12:24 AM<br />11/26/2024</Clock>
          <svg width="18" height="19" viewBox="0 0 18 19" {...line} strokeWidth="1.500"><path d="M9 1.200c-3.600 0-6 2.500-6 6V11l-1.800 3.500h15.600L15 11V7.200c0-3.500-2.400-6-6-6zM6.800 15q.4 2.600 2.200 2.600t2.200-2.600" /></svg>
        </Tray>
      </Taskbar>
    </Screen>
  );
}
